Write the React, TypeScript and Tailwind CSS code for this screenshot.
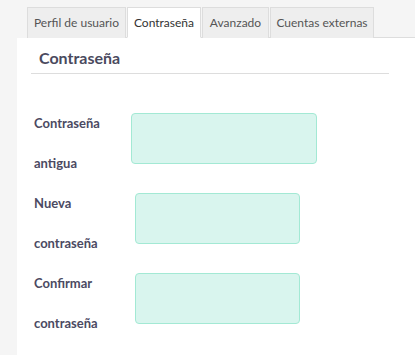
import React from "react";

const tabs = [
  { label: "Perfil de usuario", w: "w-[99px]", active: false },
  { label: "Contraseña", w: "w-[74px]", active: true },
  { label: "Avanzado", w: "w-[67px]", active: false },
  { label: "Cuentas externas", w: "w-[104px]", active: false },
];

function Row({ l1, l2, lw, iw }: { l1: string; l2: string; lw: string; iw: string }) {
  return (
    <div className="flex h-[80px]">
      <div className={`${lw} shrink-0 text-[13px] font-bold leading-[40px] text-[#4b4a62]`}>
        <div>{l1}</div>
        <div>{l2}</div>
      </div>
      <div
        className={`${iw} mt-[10px] h-[51px] rounded-[4px] border border-[#a3e9d4] bg-[#d9f5ee]`}
      />
    </div>
  );
}

export default function App() {
  return (
    <div
      className="flex h-[355px] w-full flex-col overflow-hidden bg-[#f5f5f5] pt-[7px]"
      style={{ fontFamily: "Lato, 'Noto Sans', sans-serif" }}
    >
      <div className="ml-[27px] flex h-[31px] border-b border-[#dddddd]">
        {tabs.map((t) => (
          <div
            key={t.label}
            className={`${t.w} mr-[1px] flex h-[31px] items-center justify-center border border-[#dddddd] text-[12px] ${
              t.active
                ? "border-b-white bg-white text-[#333333]"
                : "border-b-0 h-[30px] bg-[#eeeeee] text-[#555555]"
            }`}
          >
            {t.label}
          </div>
        ))}
      </div>
      <div className="ml-[17px] flex-1 bg-white">
        <div className="mx-[14px] mr-[26px] border-b border-[#dddddd] pb-[5px] pl-[8px] pt-[10px] text-[16px] font-bold leading-[20px] text-[#4a4a5e]">
          Contraseña
        </div>
        <div className="mt-[29px] pl-[17px]">
          <Row l1="Contraseña" l2="antigua" lw="w-[97px]" iw="w-[186px]" />
          <Row l1="Nueva" l2="contraseña" lw="w-[101px]" iw="w-[165px]" />
          <Row l1="Confirmar" l2="contraseña" lw="w-[101px]" iw="w-[165px]" />
        </div>
      </div>
    </div>
  );
}
